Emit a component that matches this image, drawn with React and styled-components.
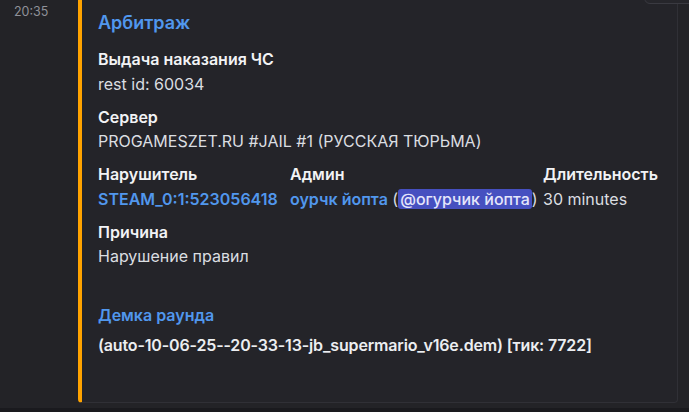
import React from "react";
import styled, { createGlobalStyle } from "styled-components";

const Global = createGlobalStyle`
  html, body { margin: 0; padding: 0; background: #1a1a1e; overflow: hidden; }
  body { font-family: Inter, "Noto Sans", "Liberation Sans", sans-serif; -webkit-font-smoothing: antialiased; }
`;

const Page = styled.div`
  width: 689px;
  height: 412px;
  display: flex;
  flex-direction: column;
  background: #1a1a1e;
`;

const Message = styled.div`
  position: relative;
  display: flex;
  height: 408px;
  background: #232327;
  overflow: hidden;
`;

const Gutter = styled.div`
  width: 78px;
  flex: none;
  padding: 0 0 0 14px;
  box-sizing: border-box;
`;

const Time = styled.span`
  font-size: 12.5px;
  color: #8f9199;
  line-height: 16px;
`;

const Embed = styled.div`
  margin-top: -8px;
  width: 600px;
  height: 411px;
  box-sizing: border-box;
  background: #242429;
  border: 1px solid #303036;
  border-left: 4px solid #ffa300;
  border-radius: 4px;
  padding: 18px 16px 0 16px;
  display: flex;
  flex-direction: column;
`;

const Title = styled.div`
  color: #5197ed;
  font-size: 18px;
  font-weight: 600;
  line-height: 24px;
  margin-bottom: 13px;
`;

const Fields = styled.div`
  display: grid;
  grid-template-columns: 192px 253px auto;
  row-gap: 11px;
  justify-items: start;
`;

const Field = styled.div`
  grid-column: ${(p) => (p.$inline ? "auto" : "1 / -1")};
  display: flex;
  flex-direction: column;
  gap: 2.5px;
`;

const Name = styled.div`
  color: #f2f3f5;
  font-size: 16px;
  font-weight: 600;
  line-height: 22px;
  white-space: nowrap;
`;

const Value = styled.div`
  color: #dbdee1;
  font-size: 16px;
  font-weight: 400;
  line-height: 22px;
  white-space: nowrap;
`;

const Link = styled.span`
  color: #5197ed;
  font-weight: 600;
`;

const Mention = styled.span`
  background: #4650c0;
  color: #e4e6fb;
  font-weight: 500;
  border-radius: 3px;
  padding: 0 2px;
`;

const Demo = styled.div`
  margin-top: 37px;
  display: flex;
  flex-direction: column;
  gap: 8px;
`;

const DemoTitle = styled.div`
  color: #5197ed;
  font-size: 16px;
  font-weight: 600;
  line-height: 22px;
`;

const DemoValue = styled.div`
  color: #eceef1;
  font-size: 16px;
  font-weight: 600;
  line-height: 22px;
  letter-spacing: -0.15px;
  white-space: nowrap;
`;

const Toolbar = styled.div`
  position: absolute;
  top: -30px;
  left: 644px;
  width: 80px;
  height: 32px;
  background: #26262b;
  border: 1px solid #3a3a41;
  border-radius: 6px;
`;

export default function App() {
  return (
    <Page>
      <Global />
      <Message>
        <Gutter>
          <Time>20:35</Time>
        </Gutter>
        <Embed>
          <Title>Арбитраж</Title>
          <Fields>
            <Field>
              <Name>Выдача наказания ЧС</Name>
              <Value>rest id: 60034</Value>
            </Field>
            <Field>
              <Name>Сервер</Name>
              <Value>PROGAMESZET.RU #JAIL #1 (РУССКАЯ ТЮРЬМА)</Value>
            </Field>
            <Field $inline>
              <Name>Нарушитель</Name>
              <Value>
                <Link>STEAM_0:1:523056418</Link>
              </Value>
            </Field>
            <Field $inline>
              <Name>Админ</Name>
              <Value>
                <Link>оурчк йопта</Link> (<Mention>@огурчик йопта</Mention>)
              </Value>
            </Field>
            <Field $inline>
              <Name>Длительность</Name>
              <Value>30 minutes</Value>
            </Field>
            <Field>
              <Name>Причина</Name>
              <Value>Нарушение правил</Value>
            </Field>
          </Fields>
          <Demo>
            <DemoTitle>Демка раунда</DemoTitle>
            <DemoValue>(auto-10-06-25--20-33-13-jb_supermario_v16e.dem) [тик: 7722]</DemoValue>
          </Demo>
        </Embed>
        <Toolbar />
      </Message>
    </Page>
  );
}
